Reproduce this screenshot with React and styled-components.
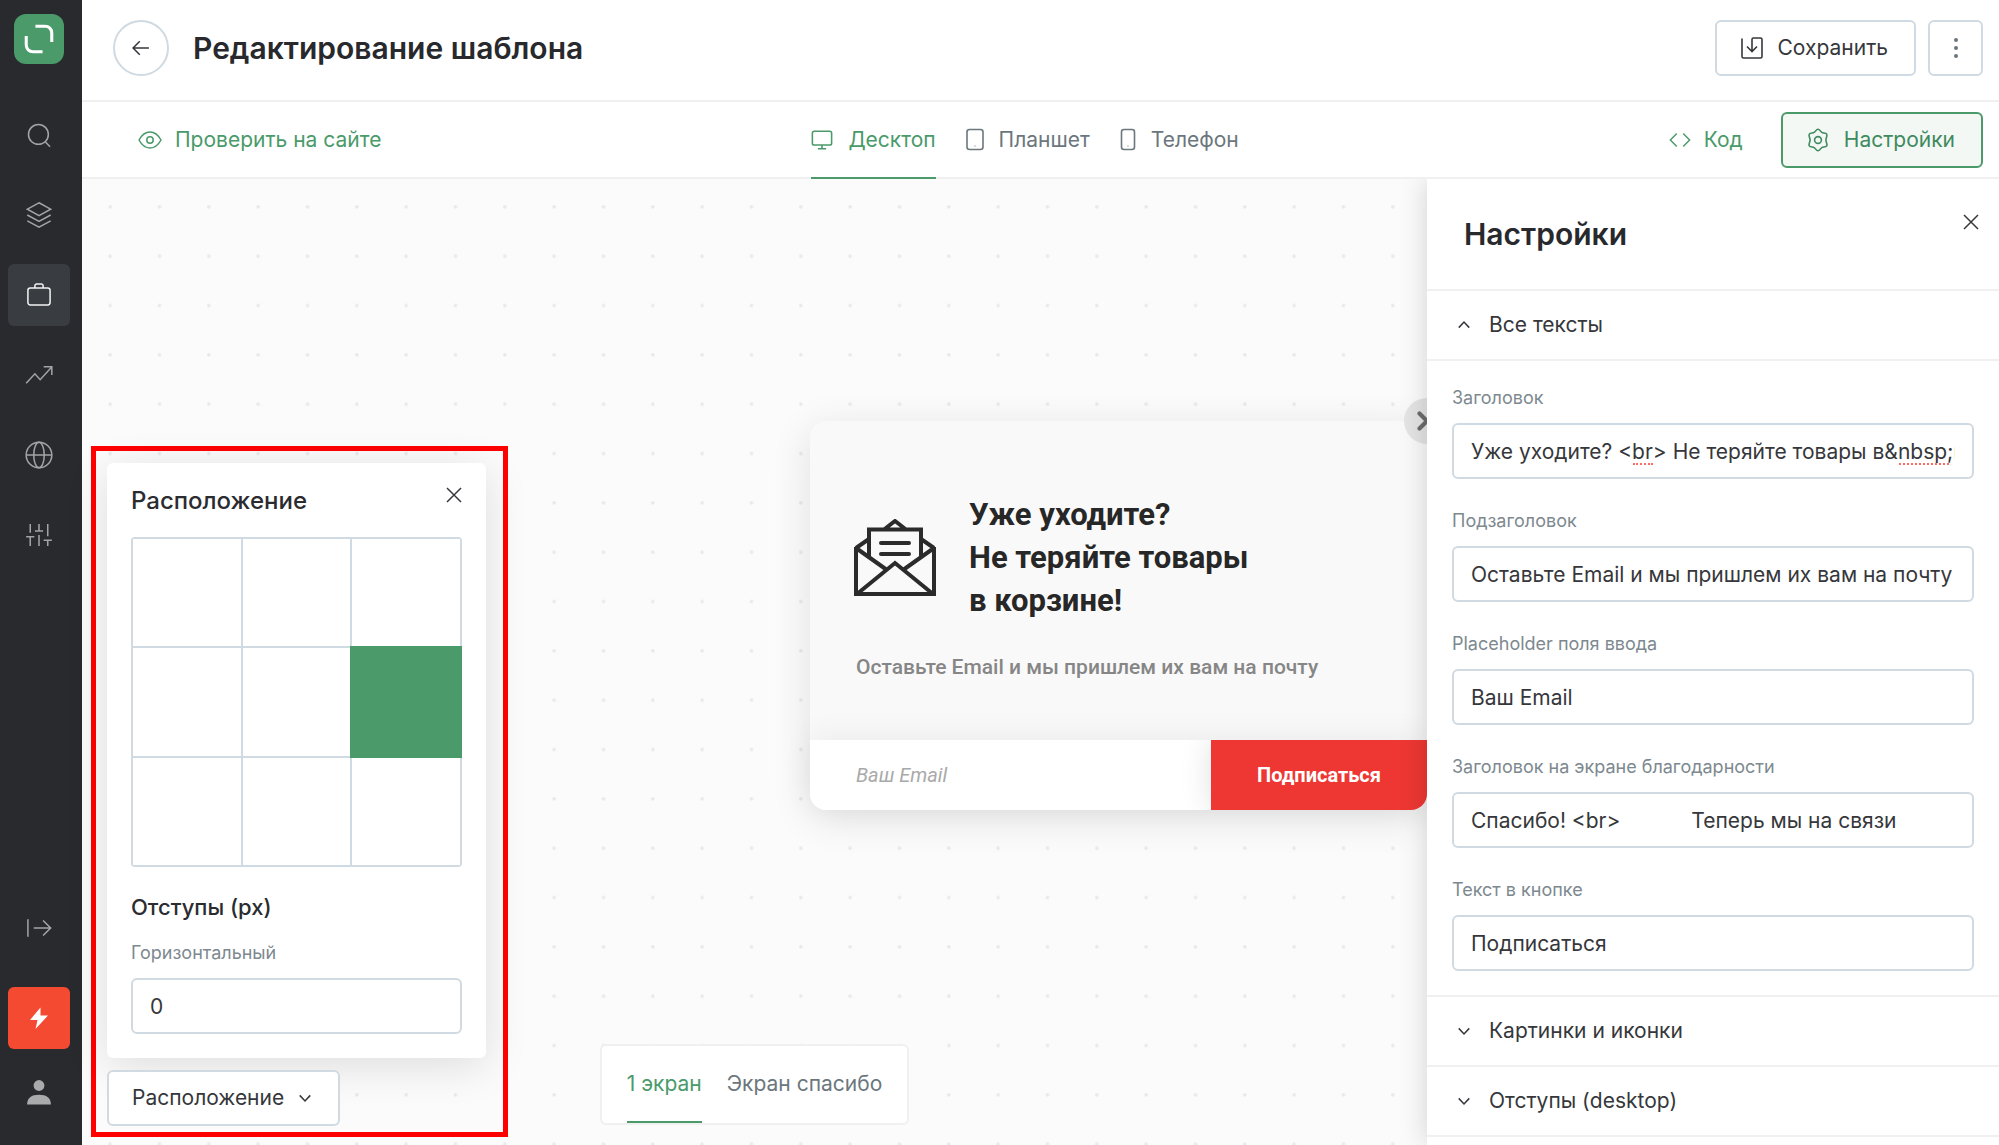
import { useState } from 'react'
import styled, { createGlobalStyle, css } from 'styled-components'

const GlobalStyle = createGlobalStyle`
* {
    box-sizing: border-box;
}
body {
    margin: 0;
    font-family: Inter, "Noto Sans", sans-serif;
    font-size: 21px;
    line-height: 28px;
    color: #36373b;
    background-color: white;
}
button, input {
    font: inherit;
    color: inherit;
}
button {
    padding: 0;
    border: none;
    background: none;
    cursor: pointer;
}
h1, h2, h3, p {
    margin: 0;
}
svg {
    display: block;
    flex: none;
}
`

const green = '#4a9a6a'
const line = '#f0f0f0'
const border = '#cfdae2'

const Page = styled.div`
display: flex;
height: 100vh;
overflow: hidden;
`

/* sidebar */

const Sidebar = styled.nav`
width: 82px;
flex: none;
padding: 14px 12px 22px 8px;
display: flex;
flex-direction: column;
align-items: center;
background-color: #292a2e;
`

const Logo = styled.a`
width: 50px;
height: 50px;
margin-bottom: 40px;
border-radius: 12px;
background-color: ${green};
`

const SideGroup = styled.div`
display: flex;
flex-direction: column;
gap: ${props => props.$gap}px;
`

const Spacer = styled.div`
flex: 1;
`

const SideButton = styled.button`
width: 62px;
height: 62px;
border-radius: 6px;
display: flex;
align-items: center;
justify-content: center;
color: ${props => props.$active ? '#f2f2f3' : '#a3a4a6'};
background-color: ${props => props.$alert ? '#f44a31' : props.$active ? '#393c41' : 'transparent'};
`

/* header */

const Main = styled.main`
flex: 1;
min-width: 0;
display: flex;
flex-direction: column;
`

const Header = styled.header`
height: 102px;
flex: none;
padding: 0 16px 4px 31px;
border-bottom: 2px solid ${line};
display: flex;
align-items: center;
gap: 12px;
`

const BackButton = styled.button`
width: 56px;
height: 56px;
margin-right: 12px;
border: 2px solid ${border};
border-radius: 50%;
display: flex;
align-items: center;
justify-content: center;
`

const Title = styled.h1`
flex: 1;
font-size: 30px;
line-height: 40px;
font-weight: 600;
color: #28292c;
`

const Button = styled.button`
height: 56px;
padding: 0 26px 0 23px;
border: 2px solid ${border};
border-radius: 6px;
display: flex;
align-items: center;
gap: 14px;
white-space: nowrap;
background-color: white;
${props => props.$square && css`
    width: 55px;
    padding: 0;
    justify-content: center;
`}
${props => props.$active && css`
    border-color: ${green};
    color: #3f8a5e;
    background-color: #f3f8f5;
`}
`

const Toolbar = styled.div`
height: 77px;
flex: none;
padding: 0 16px 0 56px;
border-bottom: 2px solid ${line};
display: flex;
align-items: center;
justify-content: space-between;
`

const ToolLink = styled.a`
display: flex;
align-items: center;
gap: 13px;
color: ${green};
text-decoration: none;
`

const ToolGroup = styled.div`
display: flex;
align-items: center;
gap: 38px;
`

const Tabs = styled.div`
display: flex;
align-self: stretch;
gap: ${props => props.$gap}px;
`

const Tab = styled.button`
display: flex;
align-items: center;
gap: 15px;
white-space: nowrap;
margin-bottom: -2px;
border-bottom: 2px solid ${props => props.$active ? green : 'transparent'};
color: ${props => props.$active ? green : '#6b777d'};
`

/* canvas */

const Work = styled.div`
flex: 1;
min-height: 0;
display: flex;
`

const Canvas = styled.section`
flex: 1;
min-width: 0;
position: relative;
display: flex;
flex-direction: column;
align-items: center;
padding: 8px 0 20px;
background-color: #fbfbfb;
`

const Dots = styled.svg`
position: absolute;
inset: 0;
width: 100%;
height: 100%;
`

const Stage = styled.div`
flex: 1;
width: 100%;
display: flex;
align-items: center;
justify-content: flex-end;
`

const Popup = styled.article`
width: 617px;
position: relative;
border-radius: 16px;
background-color: #f9f9f9;
box-shadow: 0 8px 40px rgba(0, 0, 0, 0.11);
font-family: Roboto, sans-serif;
`

const PopupClose = styled.button`
width: 46px;
height: 46px;
position: absolute;
top: -23px;
right: -23px;
border-radius: 50%;
display: flex;
align-items: center;
justify-content: center;
color: #6d6d6d;
background-color: #e4e4e4;
`

const PopupHead = styled.div`
padding: 72px 44px 31px;
display: flex;
align-items: center;
gap: 33px;
`

const PopupTitle = styled.h2`
font-size: 31px;
line-height: 43px;
font-weight: 700;
color: #272727;
`

const PopupText = styled.p`
padding: 0 46px 59px;
font-weight: 500;
color: #868686;
`

const PopupForm = styled.form`
height: 70px;
display: flex;
position: relative;
border-radius: 0 0 16px 16px;
overflow: hidden;
background-color: white;
`

const FormShade = styled.div`
border-radius: 0 0 16px 16px;
box-shadow: 0 -4px 32px rgba(0, 0, 0, 0.06);
`

const PopupInput = styled.input`
flex: 1;
min-width: 0;
padding: 0 46px;
border: none;
outline: none;
background: none;
font-style: italic;
font-size: 20px;
&::placeholder {
    color: #a9a9a9;
}
`

const PopupSubmit = styled.button`
width: 216px;
color: white;
font-size: 20px;
font-weight: 700;
background-color: #ee3733;
box-shadow: 0 0 32px rgba(0, 0, 0, 0.12);
`

const ScreenTabs = styled.div`
height: 81px;
padding: 0 25px 2px;
position: relative;
border: 2px solid #f0f0f0;
border-radius: 6px;
display: flex;
background-color: white;
`

/* position picker */

const Highlight = styled.div`
position: absolute;
left: 9px;
bottom: 8px;
padding: 12px 17px 6px 11px;
border: 5px solid #ff0000;
display: flex;
flex-direction: column;
align-items: flex-start;
gap: 12px;
`

const Picker = styled.section`
width: 379px;
padding: 20px 24px 24px;
border-radius: 6px;
background-color: white;
box-shadow: 0 8px 44px rgba(0, 0, 0, 0.12);
`

const PickerHead = styled.div`
display: flex;
align-items: flex-start;
justify-content: space-between;
margin-bottom: 20px;
`

const PickerTitle = styled.h2`
padding-top: 2px;
font-size: 24px;
line-height: 32px;
font-weight: 500;
color: #2b2c30;
`

const PickerSubtitle = styled.h3`
margin: 26px 0 20px;
font-size: 22px;
line-height: 28px;
font-weight: 500;
color: #2b2c30;
`

const IconButton = styled.button`
width: 24px;
height: 24px;
display: flex;
align-items: center;
justify-content: flex-end;
`

const PlaceGrid = styled.div`
height: 330px;
display: grid;
grid-template-columns: repeat(3, 1fr);
grid-template-rows: repeat(3, 1fr);
gap: 2px;
border: 2px solid ${border};
border-radius: 4px;
background-color: ${border};
`

const Place = styled.button`
background-color: white;
border-radius: 0;
${props => props.$active && css`
    background-color: ${green};
    outline: 2px solid ${green};
`}
`

/* settings */

const Settings = styled.aside`
width: 572px;
flex: none;
position: relative;
overflow: hidden;
background-color: white;
box-shadow: 0 0 26px rgba(0, 0, 0, 0.17);
clip-path: inset(0 0 0 -60px);
`

const SettingsHead = styled.div`
height: 112px;
padding: 31px 20px 0 37px;
border-bottom: 2px solid ${line};
display: flex;
justify-content: space-between;
`

const SettingsTitle = styled.h2`
padding-top: 4px;
font-size: 30px;
line-height: 40px;
font-weight: 600;
color: #28292c;
`

const Section = styled.button`
width: 100%;
height: 70px;
padding: 0 30px;
border-bottom: 2px solid ${line};
display: flex;
align-items: center;
gap: 18px;
`

const Fields = styled.div`
padding: 25px 25px 24px;
border-bottom: 2px solid ${line};
display: flex;
flex-direction: column;
gap: 30px;
`

const Field = styled.div`
position: relative;
`

const Label = styled.label`
display: block;
margin-bottom: 13px;
font-size: 18px;
line-height: 24px;
color: #7d898f;
`

const Input = styled.input`
display: block;
width: 100%;
height: 56px;
padding: 0 17px;
border: 2px solid ${border};
border-radius: 6px;
outline: none;
background-color: white;
`

/* spelling mark under a word of the input */
const Typo = styled.span`
position: absolute;
left: ${props => props.$left}px;
bottom: 14px;
width: ${props => props.$width}px;
border-bottom: 2px dotted #ff6b63;
`

const Icon = ({ size = 24, stroke = 1.3, children, ...rest }) => (
  <svg width={size} height={size} viewBox="0 0 24 24" fill="none" stroke="currentColor" strokeWidth={stroke} aria-hidden="true" {...rest}>
    {children}
  </svg>
)

const Chevron = ({ up }) => (
  <Icon size={14} stroke={2.6}>
    <path d={up ? 'M3 16.5l9-9.500 9 9.500' : 'M3 7.500l9 9.500 9-9.500'} />
  </Icon>
)

const Close = () => (
  <Icon size={16} stroke={2.2}>
    <path d="M1.500 1.500l21 21M22.500 1.500l-21 21" />
  </Icon>
)

const sideItems = [
  { name: 'Поиск', icon: <><circle cx="11.5" cy="11.5" r="8.5" /><path d="M17.5 18l4 4" /></> },
  { name: 'Слои', icon: <path d="M12 1.5l10 5.5-10 5.5L2 7zM2 12l10 5.5L22 12M2 17l10 5.5L22 17" /> },
  { name: 'Проекты', active: true, icon: <><rect x="2.5" y="6" width="19" height="14.5" rx="2" /><path d="M8.5 6V4a1.500 1.500 0 0 1 1.500-1.500h4a1.500 1.500 0 0 1 1.500 1.500v2" /></> },
  { name: 'Аналитика', icon: <path d="M1 19l7.500-8 4.500 5L22.500 5.500M16 5h7v7" /> },
  { name: 'Сайт', icon: <><circle cx="12" cy="12" r="11" /><ellipse cx="12" cy="12" rx="4.500" ry="11" /><path d="M1 12h22" /></> },
  { name: 'Параметры', icon: <path d="M4.500 2.500v7.500M4.500 14v7.500M1 13.500h7M12 2.500v5.500M12 12v9.500M8.500 8.500h7M19.500 2.500v10.500M19.500 16.500v5M16 16.500h7" /> },
]

const fields = [
  { id: 'title', label: 'Заголовок', value: 'Уже уходите? <br> Не теряйте товары в&nbsp;корзине!' },
  { id: 'subtitle', label: 'Подзаголовок', value: 'Оставьте Email и мы пришлем их вам на почту' },
  { id: 'placeholder', label: 'Placeholder поля ввода', value: 'Ваш Email' },
  { id: 'thanks', label: 'Заголовок на экране благодарности', value: 'Спасибо! <br>            Теперь мы на связи' },
  { id: 'button', label: 'Текст в кнопке', value: 'Подписаться' },
]

const App = () => {
  const [place, setPlace] = useState(5)

  return (
    <Page>
      <GlobalStyle />
      <Sidebar>
        <Logo href="#" aria-label="Главная">
          <svg width="50" height="50" viewBox="0 0 49 49" fill="none" stroke="white" strokeWidth="3">
            <path d="M21 12h9.500a6.500 6.500 0 0 1 6.500 6.500v9" />
            <path d="M28 37H18.500a6.500 6.500 0 0 1-6.500-6.500v-9" />
          </svg>
        </Logo>
        <SideGroup $gap={18}>
          {sideItems.map(item => (
            <SideButton key={item.name} $active={item.active} aria-label={item.name}>
              <Icon size={28}>{item.icon}</Icon>
            </SideButton>
          ))}
        </SideGroup>
        <Spacer />
        <SideGroup $gap={28}>
          <SideButton aria-label="Развернуть">
            <Icon size={28}><path d="M2.500 4.500v15M7.500 12h14M15.500 5.500l6.500 6.500-6.500 6.500" /></Icon>
          </SideButton>
          <SideGroup $gap={12}>
            <SideButton $alert aria-label="Уведомления">
              <Icon size={24} stroke={0} fill="white"><path d="M13.500 1.500L3 14h7.500l-2 9L21 9.500h-7.500z" /></Icon>
            </SideButton>
            <SideButton aria-label="Профиль">
              <Icon size={26} stroke={0} fill="#a9aaac"><circle cx="12" cy="6" r="5" /><path d="M1 23.500c0-6 4-9 11-9s11 3 11 9z" /></Icon>
            </SideButton>
          </SideGroup>
        </SideGroup>
      </Sidebar>
      <Main>
        <Header>
          <BackButton aria-label="Назад">
            <Icon size={20} stroke={1.8}><path d="M21.500 12H3M10.500 4L2.500 12l8 8" /></Icon>
          </BackButton>
          <Title>Редактирование шаблона</Title>
          <Button>
            <Icon size={24} stroke={1.6}><path d="M2 2.500v18a1.500 1.500 0 0 0 1.500 1.500h17a1.500 1.500 0 0 0 1.500-1.500v-17a1.500 1.500 0 0 0-1.500-1.500h-7a1.500 1.500 0 0 0-1.500 1.500v12M7 10.500l5 5 5-5" /></Icon>
            Сохранить
          </Button>
          <Button $square aria-label="Ещё">
            <Icon size={24} stroke={0} fill="#6b777d"><circle cx="12" cy="4" r="2" /><circle cx="12" cy="12" r="2" /><circle cx="12" cy="20" r="2" /></Icon>
          </Button>
        </Header>
        <Toolbar>
          <ToolLink href="#">
            <Icon size={24} stroke={1.5}><path d="M1 12c3-5.500 6.500-8 11-8s8 2.500 11 8c-3 5.500-6.500 8-11 8s-8-2.500-11-8z" /><circle cx="12" cy="12" r="3.200" /></Icon>
            Проверить на сайте
          </ToolLink>
          <Tabs $gap={30}>
            <Tab $active>
              <Icon size={22} stroke={1.7}><rect x="1.500" y="2.500" width="21" height="15" rx="2" /><path d="M12 17.500v4M7.500 21.500h9" /></Icon>
              Десктоп
            </Tab>
            <Tab>
              <svg width="18" height="24" viewBox="0 0 18 24" fill="none" stroke="currentColor" strokeWidth="1.600"><rect x="1" y="1.500" width="16" height="20" rx="2.500" /><path d="M8.500 18h1" strokeWidth="1" /></svg>
              Планшет
            </Tab>
            <Tab>
              <svg width="16" height="24" viewBox="0 0 16 24" fill="none" stroke="currentColor" strokeWidth="1.600"><rect x="1.500" y="1.500" width="13" height="20" rx="2.500" /><path d="M7.500 18h1" strokeWidth="1" /></svg>
              Телефон
            </Tab>
          </Tabs>
          <ToolGroup>
            <ToolLink href="#">
              <Icon size={22} stroke={1.6}><path d="M8.500 5L1.500 12l7 7M15.500 5l7 7-7 7" /></Icon>
              Код
            </ToolLink>
            <Button $active>
              <Icon size={24} stroke={1.6}>
                <path d="M12 1.200c1.800 0 2.300 2.300 3.800 3.200s3.900.2 4.900 1.800-.8 3.700-.8 5.800 1.800 4.200.8 5.800-3.400.9-4.900 1.800-2 3.200-3.800 3.200-2.300-2.300-3.800-3.200-3.900-.2-4.900-1.800.8-3.700.8-5.800-1.800-4.200-.8-5.800 3.400-.9 4.900-1.800S10.200 1.200 12 1.200z" />
                <circle cx="12" cy="12" r="3.400" />
              </Icon>
              Настройки
            </Button>
          </ToolGroup>
        </Toolbar>
        <Work>
          <Canvas>
            <Dots aria-hidden="true">
              <pattern id="dots" x="3.600" y="3.300" width="49.333" height="49.333" patternUnits="userSpaceOnUse">
                <circle cx="24.600" cy="24.600" r="1.800" fill="#e6eaeb" />
              </pattern>
              <rect width="100%" height="100%" fill="url(#dots)" />
            </Dots>
            <Stage>
              <Popup>
                <PopupHead>
                  <svg width="82" height="77" viewBox="0 0 82 77" fill="none" stroke="#2b2b2b" strokeWidth="4">
                    <path d="M2 28v47h78V28M2 29l31 22M2 29l13-9M80 29L49 51M80 29l-13-9M3 75l38-31 38 31" />
                    <path d="M15 38V10.500h52V38M30 10.500L41 2l11 8.500" />
                    <path d="M27 24h28M27 35h28" strokeLinecap="round" />
                  </svg>
                  <PopupTitle>Уже уходите?<br />Не теряйте товары<br />в корзине!</PopupTitle>
                </PopupHead>
                <PopupText>Оставьте Email и мы пришлем их вам на почту</PopupText>
                <FormShade>
                  <PopupForm>
                    <PopupInput placeholder="Ваш Email" aria-label="Ваш Email" />
                    <PopupSubmit type="button">Подписаться</PopupSubmit>
                  </PopupForm>
                </FormShade>
                <PopupClose aria-label="Закрыть окно">
                  <Icon size={20} stroke={5}><path d="M3 3l18 18M21 3L3 21" strokeLinecap="round" /></Icon>
                </PopupClose>
              </Popup>
            </Stage>
            <ScreenTabs>
              <Tabs $gap={25}>
                <Tab $active>1 экран</Tab>
                <Tab>Экран спасибо</Tab>
              </Tabs>
            </ScreenTabs>
            <Highlight>
              <Picker>
                <PickerHead>
                  <PickerTitle>Расположение</PickerTitle>
                  <IconButton aria-label="Закрыть"><Close /></IconButton>
                </PickerHead>
                <PlaceGrid>
                  {Array.from({ length: 9 }, (_, i) => (
                    <Place key={i} $active={i === place} onClick={() => setPlace(i)} aria-label={`Позиция ${i + 1}`} />
                  ))}
                </PlaceGrid>
                <PickerSubtitle>Отступы (px)</PickerSubtitle>
                <Label htmlFor="horizontal">Горизонтальный</Label>
                <Input id="horizontal" defaultValue="0" />
              </Picker>
              <Button>
                Расположение
                <Chevron />
              </Button>
            </Highlight>
          </Canvas>
          <Settings>
            <SettingsHead>
              <SettingsTitle>Настройки</SettingsTitle>
              <IconButton aria-label="Закрыть настройки"><Close /></IconButton>
            </SettingsHead>
            <Section><Chevron up />Все тексты</Section>
            <Fields>
              {fields.map(field => (
                <Field key={field.id}>
                  <Label htmlFor={field.id}>{field.label}</Label>
                  <Input id={field.id} defaultValue={field.value} spellCheck={false} />
                  {field.id === 'title' && <><Typo $left={181} $width={20} /><Typo $left={447} $width={50} /></>}
                </Field>
              ))}
            </Fields>
            <Section><Chevron />Картинки и иконки</Section>
            <Section><Chevron />Отступы (desktop)</Section>
          </Settings>
        </Work>
      </Main>
    </Page>
  )
}

export default App
